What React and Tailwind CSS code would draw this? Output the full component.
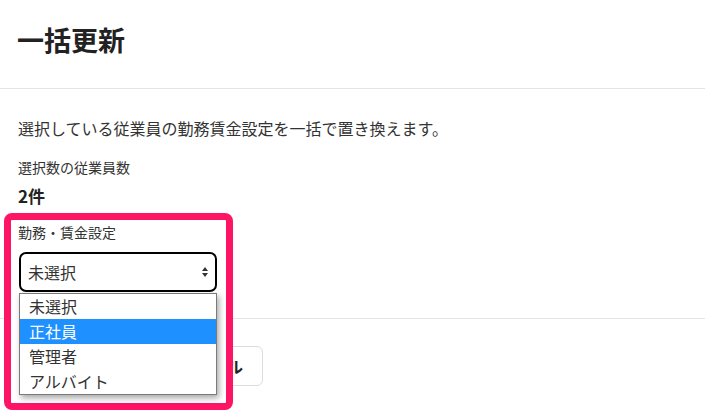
import React from "react";

function Arrows() {
  return (
    <svg width="8" height="12" viewBox="0 0 8 12" className="shrink-0">
      <path d="M4 1 L7 5 L1 5 Z" fill="#333" />
      <path d="M4 11 L7 7 L1 7 Z" fill="#333" />
    </svg>
  );
}

export default function App() {
  const items = ["未選択", "正社員", "管理者", "アルバイト"];
  return (
    <div
      className="relative w-[705px] h-[410px] overflow-hidden bg-white text-[#333]"
      style={{ fontFamily: '"Noto Sans CJK JP", "Noto Sans", sans-serif' }}
    >
      <div className="h-[89px] border-b border-[#e4e4e4] px-[17px] pt-[20px]">
        <h1 className="text-[27px] leading-[40px] font-bold text-[#222]">一括更新</h1>
      </div>
      <div className="px-[18px] pt-[27px] pb-[26px]">
        <p className="text-[16px] leading-[24px]">選択している従業員の勤務賃金設定を一括で置き換えます。</p>
        <p className="mt-[17px] text-[14px] leading-[20px]">選択数の従業員数</p>
        <p className="mt-[7px] text-[17px] leading-[24px] font-bold text-[#222]">2件</p>
        <div className="mt-[15px]">
          <p className="text-[14px] leading-[20px] invisible">勤務・賃金設定</p>
          <div className="mt-[9px] w-[198px] h-[40px]" />
        </div>
      </div>
      <div className="border-t border-[#e4e4e4] px-[18px] pt-[27px] flex">
        <button className="ml-[125px] h-[40px] px-[19px] rounded-md border border-[#dcdcdc] bg-white text-[16px] font-bold text-[#222]">
          キャンセル
        </button>
      </div>

      {/* annotation overlay */}
      <div className="absolute left-[4px] top-[213px] w-[229px] h-[197px] rounded-[8px] border-[7px] border-[#fe1465] bg-white pl-[8px] pt-[2px]">
        <p className="text-[14px] leading-[20px] -ml-px">勤務・賃金設定</p>
        <div className="mt-[10px] w-[198px] h-[40px] rounded-[7px] border-2 border-black flex items-center justify-between pl-[7px] pr-[6px] text-[16px] text-[#333]">
          <span>未選択</span>
          <Arrows />
        </div>
        <div className="mt-px w-[198px] border border-[#7a7a7a] bg-white shadow-[2px_3px_6px_rgba(0,0,0,0.35)]">
          {items.map((it, i) => (
            <div
              key={it}
              className={
                "h-[25px] leading-[25px] pl-[9px] text-[16px] " +
                (i === 1 ? "bg-[#1e90ff] text-white" : "text-[#333]")
              }
            >
              {it}
            </div>
          ))}
        </div>
      </div>
    </div>
  );
}
